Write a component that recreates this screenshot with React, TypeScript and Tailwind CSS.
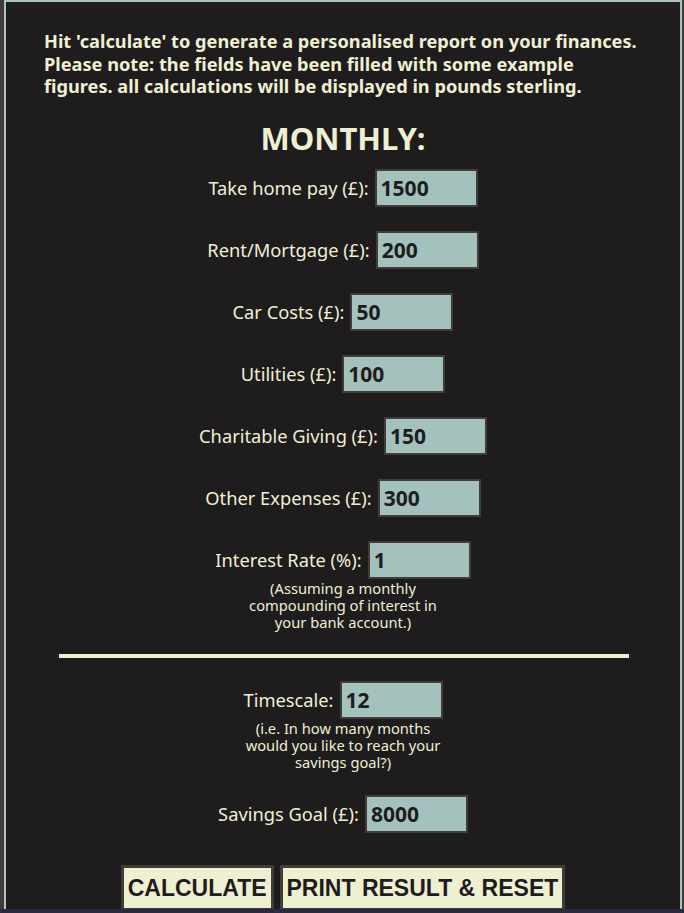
import React from "react";

const fields = [
  { label: "Take home pay (£):", value: "1500" },
  { label: "Rent/Mortgage (£):", value: "200" },
  { label: "Car Costs (£):", value: "50" },
  { label: "Utilities (£):", value: "100" },
  { label: "Charitable Giving (£):", value: "150" },
  { label: "Other Expenses (£):", value: "300" },
];

const Field: React.FC<{ label: string; value: string }> = ({ label, value }) => (
  <div className="flex items-center justify-center">
    <label className="mr-[6px] text-[18.3px] text-[#efefd2]">{label}</label>
    <input
      defaultValue={value}
      className="box-border h-[38px] w-[103px] border-2 border-[#423c38] bg-[#a3c1bd] px-[4px] text-[21px] font-bold text-[#1e1c1d] outline-none"
    />
  </div>
);

const Note: React.FC<{ children: React.ReactNode }> = ({ children }) => (
  <p className="mx-auto mt-[1px] w-[215px] text-center text-[14.7px] leading-[17px] text-[#efefd2]">
    {children}
  </p>
);

export default function App() {
  return (
    <div
      className="flex h-[913px] flex-col overflow-hidden bg-[#272b3d]"
      style={{ fontFamily: "'Noto Sans', 'Open Sans', sans-serif" }}
    >
      <div className="flex h-[909px] overflow-hidden bg-[#423c38] pl-[4px] pr-[2px]">
        <div className="flex-1 border-x-2 border-t-2 border-[#a8c4bf] bg-[#1e1c1d]">
          {/* Intro */}
          <p className="mt-[28px] w-[640px] pl-[38px] text-[18.2px] font-bold leading-[22.5px] text-[#efefd2]">
            Hit 'calculate' to generate a personalised report on your finances.
            Please note: the fields have been filled with some example figures.
            all calculations will be displayed in pounds sterling.
          </p>

          <h2 className="mt-[21px] text-center text-[31px] font-bold leading-[38px] text-[#efefd2]">
            MONTHLY:
          </h2>

          <div className="mt-[12px] flex flex-col gap-[24px]">
            {fields.map((f) => (
              <Field key={f.label} label={f.label} value={f.value} />
            ))}
            <div>
              <Field label="Interest Rate (%):" value="1" />
              <Note>
                (Assuming a monthly compounding of interest in your bank account.)
              </Note>
            </div>
          </div>

          <hr className="ml-[53px] mr-[51px] mt-[23px] h-[4px] border-0 bg-[#efefd2]" />

          <div className="mt-[23px]">
            <Field label="Timescale:" value="12" />
            <Note>
              (i.e. In how many months would you like to reach your savings goal?)
            </Note>
          </div>

          <div className="mt-[24px]">
            <Field label="Savings Goal (£):" value="8000" />
          </div>

          {/* Buttons */}
          <div className="mt-[32px] flex justify-center gap-[6px]">
            <button
              className="h-[46px] border-[3px] border-[#423c38] bg-[#efefd2] px-[4px] text-[23px] font-bold leading-[36px] text-[#1e1c1d]"
              style={{ fontFamily: "'Liberation Sans', Arial, sans-serif" }}
            >
              CALCULATE
            </button>
            <button
              className="h-[46px] border-[3px] border-[#423c38] bg-[#efefd2] px-[4px] text-[23px] font-bold leading-[36px] text-[#1e1c1d]"
              style={{ fontFamily: "'Liberation Sans', Arial, sans-serif" }}
            >
              PRINT RESULT &amp; RESET
            </button>
          </div>
        </div>
      </div>
    </div>
  );
}
